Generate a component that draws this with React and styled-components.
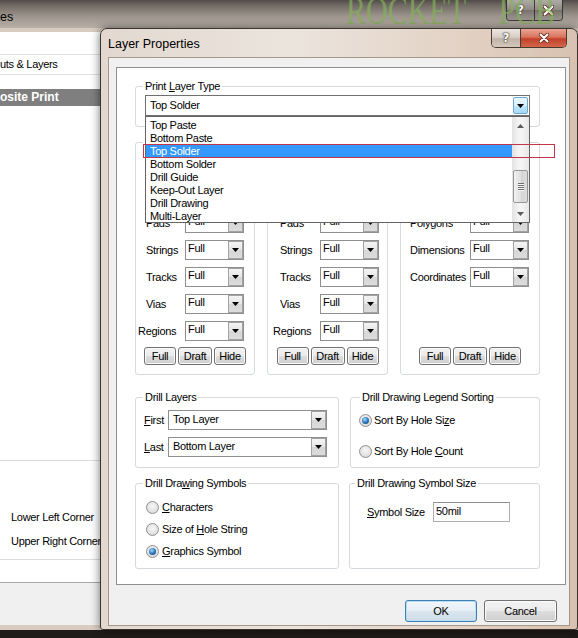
import React from 'react';
import styled, { createGlobalStyle, css } from 'styled-components';

const GlobalStyle = createGlobalStyle`
  html, body {
    margin: 0;
    padding: 0;
    background: #1f1b19;
  }
  body {
    width: 578px;
    height: 638px;
    overflow: hidden;
    font-family: "Liberation Sans", Arial, sans-serif;
    font-size: 11px;
    letter-spacing: -0.3px;
    color: #000;
  }
`;

const Desktop = styled.div`
  position: relative;
  width: 578px;
  height: 638px;
  overflow: hidden;
  background: #1f1b19;
`;

/* ---------- window behind ---------- */

const BackWindow = styled.div`
  width: 578px;
  height: 630px;
  display: flex;
  flex-direction: column;
`;

const BackTitleBar = styled.div`
  height: 28px;
  flex: none;
  display: flex;
  align-items: flex-start;
  background: linear-gradient(180deg, #514c48 0px, #6f6963 5px, #9c948c 16px, #b9b0a7 28px);
`;

const BackTitle = styled.span`
  padding-top: 9px;
  line-height: 16px;
  font-size: 12.5px;
  letter-spacing: 0;
`;

const BackCaption = styled.div`
  margin-left: auto;
  margin-right: 15px;
  display: flex;
  height: 20px;
  border: 1px solid rgba(40, 38, 36, 0.8);
  border-top: none;
  border-radius: 0 0 4px 4px;
  overflow: hidden;
`;

const BackCapButton = styled.span`
  width: 27px;
  display: flex;
  align-items: center;
  justify-content: center;
  background: linear-gradient(
    180deg,
    rgba(215, 212, 208, 0.7),
    rgba(150, 145, 140, 0.6) 50%,
    rgba(110, 105, 100, 0.6) 51%,
    rgba(150, 145, 140, 0.65)
  );
  & + & {
    border-left: 1px solid rgba(40, 38, 36, 0.8);
  }
`;

const Watermark = styled.div`
  position: absolute;
  z-index: 2;
  left: 346px;
  top: -9px;
  font-family: "Liberation Serif", "Times New Roman", serif;
  font-size: 40px;
  line-height: 40px;
  letter-spacing: 0;
  word-spacing: 34px;
  white-space: pre;
  color: rgba(132, 178, 88, 0.7);
  transform: scaleX(0.75);
  transform-origin: left top;
  pointer-events: none;
`;

const BackBody = styled.div`
  flex: 1;
  display: flex;
  flex-direction: column;
  padding: 4px 0 5px;
  background: #d8cbbf;
`;

const BackList = styled.div`
  height: 550px;
  flex: none;
  display: flex;
  flex-direction: column;
  background: #fff;
  border-bottom: 1px solid #a9a9a9;
`;

const BackRow = styled.div`
  height: ${p => p.$h}px;
  line-height: ${p => p.$h}px;
  flex: none;
  white-space: nowrap;
  border-bottom: ${p => (p.$line ? '1px solid #e2e2e2' : 'none')};
  ${p =>
    p.$selected &&
    css`
      background: #7f7f7f;
      color: #fff;
      font-weight: 700;
      font-size: 12px;
      letter-spacing: 0;
    `}
`;

const BackSpacer = styled.div`
  flex: 1;
`;

const CornerSection = styled.div`
  flex: none;
  border-top: 1px solid #dcdcdc;
  border-bottom: 1px solid #dcdcdc;
  padding: 44px 0 6px 11px;
  margin-bottom: 22px;
  white-space: nowrap;
`;

const CornerRow = styled.div`
  line-height: 24px;
`;

const BackFooter = styled.div`
  flex: 1;
  background: #f0f0f0;
`;

/* ---------- dialog ---------- */

const Dialog = styled.div`
  position: absolute;
  z-index: 3;
  left: 100px;
  top: 28px;
  width: 478px;
  height: 602px;
  box-sizing: border-box;
  display: flex;
  flex-direction: column;
  border: 1px solid #3b332d;
  border-radius: 7px 7px 3px 3px;
  background: linear-gradient(90deg, #e2d8cf 0%, #ebe4dd 40%, #e3d2c5 75%, #d8c1b0 100%);
  box-shadow: 0 0 10px rgba(0, 0, 0, 0.55);
`;

const DialogTitleBar = styled.div`
  height: 28px;
  flex: none;
  display: flex;
  align-items: flex-start;
`;

const DialogTitle = styled.span`
  padding: 7px 0 0 7px;
  line-height: 16px;
  font-size: 12.5px;
  letter-spacing: 0;
`;

const CaptionGroup = styled.div`
  margin-left: auto;
  margin-right: 10px;
  display: flex;
  height: 18px;
  border: 1px solid #4a3b30;
  border-top: none;
  border-radius: 0 0 5px 5px;
  overflow: hidden;
`;

const CaptionButton = styled.span`
  width: ${p => p.$w}px;
  display: flex;
  align-items: center;
  justify-content: center;
  background: ${p =>
    p.$close
      ? 'linear-gradient(180deg, #e9a593 0%, #d9735c 45%, #c2402a 55%, #d4684c 100%)'
      : 'linear-gradient(180deg, #ece5df 0%, #d9cfc6 45%, #c1b4a8 55%, #d3c8be 100%)'};
  & + & {
    border-left: 1px solid #4a3b30;
  }
`;

const HelpGlyph = styled.span`
  font-family: "DejaVu Sans", sans-serif;
  font-weight: 700;
  font-size: 12px;
  line-height: 12px;
  color: #fff;
  letter-spacing: 0;
  text-shadow: 0 0 1px #3a2e26, 0 0 1px #3a2e26, 0 0 2px #3a2e26;
`;

const Client = styled.div`
  flex: 1;
  margin: 0 7px 3px;
  display: flex;
  flex-direction: column;
  background: #f0f0f0;
  border: 1px solid #a69787;
  padding: 9px 3px 0 7px;
`;

const Panel = styled.div`
  position: relative;
  height: 518px;
  box-sizing: border-box;
  flex: none;
  background: #fff;
  border: 1px solid #8e8f8f;
  padding: 11px 25px 15px 18px;
  display: flex;
  flex-direction: column;
`;

const Group = styled.fieldset`
  margin: 0;
  padding: 0;
  min-width: 0;
  box-sizing: border-box;
  width: ${p => (p.$w ? `${p.$w}px` : 'auto')};
  border: 1px solid #d5dadf;
  border-radius: 3px;
`;

const Legend = styled.legend`
  margin-left: ${p => p.$x ?? 7}px;
  padding: 0 2px;
  font-size: 11px;
  line-height: 14px;
  white-space: nowrap;
`;

const GroupBody = styled.div`
  padding: ${p => p.$pad};
  display: flex;
  flex-direction: column;
  gap: ${p => p.$gap ?? 0}px;
`;

const GroupRow = styled.div`
  display: flex;
  justify-content: space-between;
  margin-top: ${p => p.$mt}px;
`;

const FieldRow = styled.div`
  height: 20px;
  display: flex;
  align-items: center;
  padding-left: ${p => p.$pl ?? 0}px;
`;

const FieldLabel = styled.span`
  width: ${p => p.$w}px;
  margin-left: ${p => p.$shift ?? 0}px;
  flex: none;
  white-space: nowrap;
`;

const Combo = styled.div`
  width: ${p => p.$w}px;
  height: ${p => p.$h ?? 20}px;
  box-sizing: border-box;
  flex: none;
  display: flex;
  border: 1px solid ${p => (p.$dark ? '#707070' : '#8e8f8f')};
  background: #fff;
`;

const ComboText = styled.span`
  flex: 1;
  padding-left: ${p => p.$pl ?? 2}px;
  line-height: ${p => p.$lh ?? 16}px;
  white-space: nowrap;
  overflow: hidden;
`;

const ComboButton = styled.span`
  width: 15px;
  flex: none;
  box-sizing: border-box;
  margin: ${p => (p.$hot ? '1px' : '0')};
  display: flex;
  align-items: center;
  justify-content: center;
  border: 1px solid ${p => (p.$hot ? '#6fa7d0' : '#a3a3a3')};
  border-radius: ${p => (p.$hot ? '2px' : '0')};
  background: ${p =>
    p.$hot
      ? 'linear-gradient(180deg, #eaf6fd 0%, #d9f0fc 50%, #bee6fd 51%, #a7d9f5 100%)'
      : 'linear-gradient(180deg, #f4f4f4 0%, #e6e6e6 50%, #d6d6d6 51%, #dcdcdc 100%)'};
`;

const ButtonRow = styled.div`
  display: flex;
  justify-content: center;
  gap: 2px;
  margin-top: ${p => p.$mt}px;
`;

const PushButton = styled.button`
  width: ${p => p.$w}px;
  height: ${p => p.$h ?? 18}px;
  padding: 0;
  box-sizing: border-box;
  font-family: inherit;
  font-size: 11px;
  letter-spacing: -0.3px;
  color: #000;
  border: 1px solid ${p => (p.$default ? '#3c7fb1' : '#707070')};
  border-radius: 3px;
  background: ${p =>
    p.$default
      ? 'linear-gradient(180deg, #f1f6fa 0%, #e7eff5 50%, #d9e5ee 51%, #cfdde8 100%)'
      : 'linear-gradient(180deg, #f2f2f2 0%, #ebebeb 50%, #dddddd 51%, #cfcfcf 100%)'};
  box-shadow: inset 0 0 0 1px ${p => (p.$default ? '#b8def5' : '#fbfbfb')};
`;

const RadioRow = styled.div`
  height: 20px;
  display: flex;
  align-items: center;
  gap: ${p => p.$gap ?? 3}px;
  white-space: nowrap;
`;

const Radio = styled.span`
  width: 13px;
  height: 13px;
  flex: none;
  box-sizing: border-box;
  border-radius: 50%;
  border: 1px solid #8e8f8f;
  background: radial-gradient(circle at 50% 40%, #f7f7f7 0%, #e2e2e2 60%, #cfcfcf 100%);
  display: flex;
  align-items: center;
  justify-content: center;
  ${p =>
    p.$on &&
    css`
      &::after {
        content: '';
        width: 7px;
        height: 7px;
        border-radius: 50%;
        background: radial-gradient(circle at 40% 35%, #9fe0ff 0%, #2d78bd 50%, #0f3460 100%);
      }
    `}
`;

const TextInput = styled.div`
  width: 77px;
  height: 20px;
  box-sizing: border-box;
  border: 1px solid #abadb3;
  border-top-color: #8e8f8f;
  padding-left: 2px;
  line-height: 16px;
  background: #fff;
`;

const DialogButtons = styled.div`
  display: flex;
  justify-content: flex-end;
  gap: 7px;
  padding: 15px 9px 3px 0;
`;

/* dropdown list that is open over the panel */

const DropList = styled.div`
  position: absolute;
  left: 28px;
  top: 48px;
  width: 385px;
  height: 107px;
  box-sizing: border-box;
  border: 1px solid #646464;
  background: #fff;
  display: flex;
  z-index: 2;
`;

const DropItems = styled.div`
  flex: 1;
  padding-top: 2px;
`;

const DropItem = styled.div`
  height: 13px;
  line-height: 13px;
  padding-left: 4px;
  white-space: nowrap;
  background: ${p => (p.$selected ? '#3399ff' : 'transparent')};
  color: ${p => (p.$selected ? '#fff' : '#000')};
`;

const ScrollBar = styled.div`
  width: 17px;
  flex: none;
  display: flex;
  flex-direction: column;
  background: linear-gradient(90deg, #e3e3e3, #f4f4f4 40%, #f4f4f4 60%, #e6e6e6);
`;

const ScrollArrow = styled.div`
  height: 17px;
  flex: none;
  display: flex;
  align-items: center;
  justify-content: center;
`;

const ScrollTrack = styled.div`
  flex: 1;
  display: flex;
  flex-direction: column;
  align-items: center;
`;

const ScrollThumb = styled.div`
  margin-top: 36px;
  width: 15px;
  height: 33px;
  box-sizing: border-box;
  border: 1px solid #979797;
  border-radius: 2px;
  background: linear-gradient(90deg, #f1f1f1, #e0e0e0 50%, #d4d4d4 51%, #dcdcdc);
  display: flex;
  flex-direction: column;
  align-items: center;
  justify-content: center;
  gap: 1px;
`;

const Grip = styled.span`
  width: 6px;
  height: 1px;
  background: #6f6f6f;
  box-shadow: 0 1px 0 #f8f8f8;
`;

const Marker = styled.div`
  position: absolute;
  left: 26px;
  top: 76px;
  width: 412px;
  height: 14px;
  box-sizing: border-box;
  border: 1px solid #c4354a;
  z-index: 3;
  pointer-events: none;
`;

/* ---------- drawings ---------- */

const Caret = ({ up = false, color = '#000' }) => (
  <svg width="7" height="4" viewBox="0 0 7 4">
    <path d={up ? 'M0 4h7L3.5 0z' : 'M0 0h7L3.5 4z'} fill={color} />
  </svg>
);

const CloseGlyph = ({ size = 10 }) => (
  <svg width={size} height={size} viewBox="0 0 10 10">
    <path d="M1.5 1.5l7 7M8.5 1.5l-7 7" stroke="#5a2418" strokeWidth="3.6" strokeLinecap="round" />
    <path d="M1.5 1.5l7 7M8.5 1.5l-7 7" stroke="#fff" strokeWidth="2" strokeLinecap="round" />
  </svg>
);

/* ---------- data ---------- */

const primitives = ['Arcs', 'Fills', 'Pads', 'Strings', 'Tracks', 'Vias', 'Regions'];

const columns = [
  { title: 'Free Primitives', w: 120, pl: 10, lw: 39, shift: -8, rows: primitives },
  { title: 'Component Primitives', w: 121, pl: 12, lw: 40, shift: -7, rows: primitives },
  {
    title: 'Others',
    w: 140,
    pl: 9,
    lw: 60,
    shift: 0,
    rows: ['Designators', 'Comments', 'Polygons', 'Dimensions', 'Coordinates'],
  },
];

const layerTypes = [
  'Top Paste',
  'Bottom Paste',
  'Top Solder',
  'Bottom Solder',
  'Drill Guide',
  'Keep-Out Layer',
  'Drill Drawing',
  'Multi-Layer',
];

function PrimitiveColumn({ col }) {
  const missing = primitives.length - col.rows.length;
  return (
    <Group $w={col.w}>
      <Legend>{col.title}</Legend>
      <GroupBody $pad="10px 0 9px" $gap={7}>
        {col.rows.map(r => (
          <FieldRow key={r} $pl={col.pl}>
            <FieldLabel
              $w={r === 'Regions' ? col.lw - col.shift : col.lw}
              $shift={r === 'Regions' ? col.shift : 0}
            >
              {r}
            </FieldLabel>
            <Combo $w={59}>
              <ComboText $lh={15}>Full</ComboText>
              <ComboButton>
                <Caret />
              </ComboButton>
            </Combo>
          </FieldRow>
        ))}
      </GroupBody>
      <ButtonRow $mt={-3 + missing * 27}>
        <PushButton $w={32}>Full</PushButton>
        <PushButton $w={34}>Draft</PushButton>
        <PushButton $w={32}>Hide</PushButton>
      </ButtonRow>
      <GroupBody $pad="0 0 9px" />
    </Group>
  );
}

export default function App() {
  return (
    <>
      <GlobalStyle />
      <Desktop>
        <BackWindow>
          <BackTitleBar>
            <BackTitle>es</BackTitle>
            <BackCaption>
              <BackCapButton>
                <HelpGlyph>?</HelpGlyph>
              </BackCapButton>
              <BackCapButton>
                <CloseGlyph size={11} />
              </BackCapButton>
            </BackCaption>
          </BackTitleBar>
          <BackBody>
            <BackList>
              <BackRow $h={22} $line />
              <BackRow $h={19} $line>
                uts &amp; Layers
              </BackRow>
              <BackRow $h={14} />
              <BackRow $h={17} $selected>
                osite Print
              </BackRow>
              <BackSpacer />
              <CornerSection>
                <CornerRow>Lower Left Corner</CornerRow>
                <CornerRow>Upper Right Corner</CornerRow>
              </CornerSection>
            </BackList>
            <BackFooter />
          </BackBody>
        </BackWindow>

        <Watermark>ROCKET PCB</Watermark>

        <Dialog>
          <DialogTitleBar>
            <DialogTitle>Layer Properties</DialogTitle>
            <CaptionGroup>
              <CaptionButton $w={28}>
                <HelpGlyph>?</HelpGlyph>
              </CaptionButton>
              <CaptionButton $w={45} $close>
                <CloseGlyph />
              </CaptionButton>
            </CaptionGroup>
          </DialogTitleBar>

          <Client>
            <Panel>
              <Group>
                <Legend>
                  Print <u>L</u>ayer Type
                </Legend>
                <GroupBody $pad="2px 9px 10px">
                  <Combo $w={385} $h={21} $dark>
                    <ComboText $pl={4} $lh={19}>
                      Top Solder
                    </ComboText>
                    <ComboButton $hot>
                      <Caret />
                    </ComboButton>
                  </Combo>
                </GroupBody>
              </Group>

              <GroupRow $mt={8}>
                {columns.map(c => (
                  <PrimitiveColumn key={c.title} col={c} />
                ))}
              </GroupRow>

              <GroupRow $mt={15}>
                <Group $w={204}>
                  <Legend>Drill Layers</Legend>
                  <GroupBody $pad="6px 10px 10px 8px" $gap={7}>
                    <FieldRow>
                      <FieldLabel $w={24}>
                        <u>F</u>irst
                      </FieldLabel>
                      <Combo $w={159}>
                        <ComboText $pl={4}>Top Layer</ComboText>
                        <ComboButton>
                          <Caret />
                        </ComboButton>
                      </Combo>
                    </FieldRow>
                    <FieldRow>
                      <FieldLabel $w={24}>
                        <u>L</u>ast
                      </FieldLabel>
                      <Combo $w={159}>
                        <ComboText $pl={4}>Bottom Layer</ComboText>
                        <ComboButton>
                          <Caret />
                        </ComboButton>
                      </Combo>
                    </FieldRow>
                  </GroupBody>
                </Group>
                <Group $w={190}>
                  <Legend $x={9}>Drill Drawing Legend Sorting</Legend>
                  <GroupBody $pad="6px 8px 0" $gap={11}>
                    <RadioRow $gap={2}>
                      <Radio $on />
                      <span>
                        Sort By Hole Si<u>z</u>e
                      </span>
                    </RadioRow>
                    <RadioRow $gap={2}>
                      <Radio />
                      <span>
                        Sort By Hole <u>C</u>ount
                      </span>
                    </RadioRow>
                  </GroupBody>
                </Group>
              </GroupRow>

              <GroupRow $mt={8}>
                <Group $w={204}>
                  <Legend>
                    Drill Dra<u>w</u>ing Symbols
                  </Legend>
                  <GroupBody $pad="7px 10px 7px" $gap={2}>
                    <RadioRow>
                      <Radio />
                      <span>
                        <u>C</u>haracters
                      </span>
                    </RadioRow>
                    <RadioRow>
                      <Radio />
                      <span>
                        Size of <u>H</u>ole String
                      </span>
                    </RadioRow>
                    <RadioRow>
                      <Radio $on />
                      <span>
                        <u>G</u>raphics Symbol
                      </span>
                    </RadioRow>
                  </GroupBody>
                </Group>
                <Group $w={191}>
                  <Legend $x={5}>Drill Drawing Symbol Size</Legend>
                  <GroupBody $pad="12px 0 0 17px">
                    <FieldRow>
                      <FieldLabel $w={66}>
                        <u>S</u>ymbol Size
                      </FieldLabel>
                      <TextInput>50mil</TextInput>
                    </FieldRow>
                  </GroupBody>
                </Group>
              </GroupRow>

              <DropList>
                <DropItems>
                  {layerTypes.map(t => (
                    <DropItem key={t} $selected={t === 'Top Solder'}>
                      {t}
                    </DropItem>
                  ))}
                </DropItems>
                <ScrollBar>
                  <ScrollArrow>
                    <Caret up color="#5c5c5c" />
                  </ScrollArrow>
                  <ScrollTrack>
                    <ScrollThumb>
                      <Grip />
                      <Grip />
                      <Grip />
                      <Grip />
                    </ScrollThumb>
                  </ScrollTrack>
                  <ScrollArrow>
                    <Caret color="#5c5c5c" />
                  </ScrollArrow>
                </ScrollBar>
              </DropList>
              <Marker />
            </Panel>

            <DialogButtons>
              <PushButton $w={72} $h={22} $default>
                OK
              </PushButton>
              <PushButton $w={73} $h={22}>
                Cancel
              </PushButton>
            </DialogButtons>
          </Client>
        </Dialog>
      </Desktop>
    </>
  );
}
